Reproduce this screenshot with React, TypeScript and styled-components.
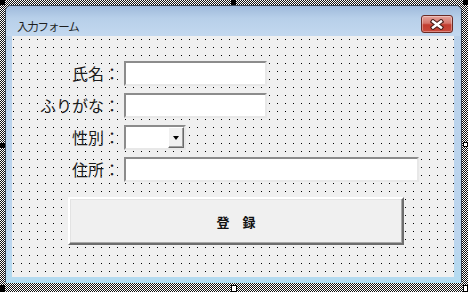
import React from 'react';
import styled, { createGlobalStyle } from 'styled-components';

const GlobalStyle = createGlobalStyle`
  html, body {
    margin: 0;
    padding: 0;
  }
  body {
    font-family: "Noto Sans CJK JP", "Noto Sans", sans-serif;
    background: #fff;
  }
`;

// hatched selection frame around the form in design mode
const Stage = styled.div`
  position: relative;
  width: 468px;
  height: 292px;
  box-sizing: border-box;
  padding: 5px 6px 9px 5px;
  background-color: #fff;
  background-image: repeating-conic-gradient(#111 0 25%, #fff 0 50%);
  background-size: 2px 2px;
`;

const Handle = styled.div<{ $top: number; $left: number; $w?: number; $h?: number; $open?: boolean }>`
  position: absolute;
  top: ${(p) => p.$top}px;
  left: ${(p) => p.$left}px;
  width: ${(p) => p.$w ?? 5}px;
  height: ${(p) => p.$h ?? 5}px;
  box-sizing: border-box;
  background: ${(p) => (p.$open ? '#fff' : '#000')};
  border: 1px solid #000;
`;

const Window = styled.div`
  height: 100%;
  box-sizing: border-box;
  display: flex;
  flex-direction: column;
  border: 1px solid #3a4656;
  border-bottom-color: #a9dcef;
  border-radius: 6px 6px 0 0;
  background: linear-gradient(#b9d1ea, #bcd5ee 85%, #b3dbf0);
  overflow: hidden;
`;

const TitleBar = styled.div`
  height: 30px;
  flex: none;
  box-sizing: border-box;
  display: flex;
  align-items: center;
  justify-content: space-between;
  padding: 6px 8px 0 11px;
  background: linear-gradient(#9fbadb, #b7cfe9 40%, #c3d8ef);
`;

const Title = styled.span`
  font-size: 11.5px;
  letter-spacing: -1.2px;
  color: #1e1e1e;
  padding-top: 3px;
`;

const CloseButton = styled.div`
  width: 32px;
  height: 18px;
  box-sizing: border-box;
  display: flex;
  align-items: center;
  justify-content: center;
  border: 1px solid #6a2a24;
  border-radius: 3px;
  background: linear-gradient(#e6a59c 0%, #d4766b 45%, #c23d2f 55%, #c9493b 100%);
  box-shadow: inset 0 0 0 1px rgba(255, 255, 255, 0.35);
`;

const Body = styled.div`
  flex: 1;
  margin: 0 7px 5px 6px;
  padding: 25px 0 0 0;
  background-color: #f0f0f0;
  background-image: linear-gradient(to bottom, transparent 1px, #f0f0f0 1px),
    linear-gradient(to right, #000 1px, #f0f0f0 1px);
  background-size: 8px 8px;
  background-position: 1px 3px;
`;

const FormGrid = styled.div`
  display: grid;
  grid-template-columns: 108px auto;
  column-gap: 4px;
  row-gap: 7px;
  align-items: center;
  justify-items: start;
`;

const Label = styled.label`
  justify-self: end;
  font-size: 16px;
  line-height: 25px;
  color: #1c1c1c;
`;

const TextBox = styled.div<{ $width: number }>`
  width: ${(p) => p.$width}px;
  height: 25px;
  box-sizing: border-box;
  background: #fff;
  border: 2px solid;
  border-color: #8c8c8c #e8e8e8 #e8e8e8 #8c8c8c;
`;

const Combo = styled(TextBox)`
  display: flex;
  justify-content: flex-end;
  padding: 0;
`;

const DropButton = styled.div`
  width: 16px;
  height: 100%;
  box-sizing: border-box;
  display: flex;
  align-items: center;
  justify-content: center;
  background: #f0f0f0;
  border: 1px solid;
  border-color: #fff #696969 #696969 #fff;
  box-shadow: inset -1px -1px 0 #a0a0a0;
`;

const Arrow = styled.span`
  width: 0;
  height: 0;
  border-left: 3.5px solid transparent;
  border-right: 3.5px solid transparent;
  border-top: 4px solid #000;
`;

const CommandButton = styled.div`
  width: 336px;
  height: 48px;
  margin: 15px 0 0 56px;
  box-sizing: border-box;
  display: flex;
  align-items: center;
  justify-content: center;
  background: #f0f0f0;
  border: 2px solid;
  border-color: #fff #6d6d6d #6d6d6d #fff;
  box-shadow: inset -1px -1px 0 #a8a8a8, inset 1px 1px 0 #e3e3e3;
  font-size: 13px;
  font-weight: 700;
  color: #111;
`;

const CloseIcon = () => (
  <svg width="14" height="11" viewBox="0 0 14 11">
    <path d="M3 2.5 L11 8.5 M11 2.5 L3 8.5" stroke="#4a1c17" strokeWidth="4.6" strokeLinecap="square" />
    <path d="M3 2.5 L11 8.5 M11 2.5 L3 8.5" stroke="#fff" strokeWidth="2.4" strokeLinecap="square" />
  </svg>
);

const App = (): JSX.Element => {
  return (
    <Stage>
      <GlobalStyle />
      <Window>
        <TitleBar>
          <Title>入力フォーム</Title>
          <CloseButton>
            <CloseIcon />
          </CloseButton>
        </TitleBar>
        <Body>
          <FormGrid>
            <Label>氏名：</Label>
            <TextBox $width={143} />
            <Label>ふりがな：</Label>
            <TextBox $width={143} />
            <Label>性別：</Label>
            <Combo $width={62}>
              <DropButton>
                <Arrow />
              </DropButton>
            </Combo>
            <Label>住所：</Label>
            <TextBox $width={295} />
          </FormGrid>
          <CommandButton>登　録</CommandButton>
        </Body>
      </Window>
      <Handle $top={0} $left={0} />
      <Handle $top={0} $left={231} />
      <Handle $top={0} $left={463} />
      <Handle $top={143} $left={0} />
      <Handle $top={142} $left={463} $open />
      <Handle $top={285} $left={0} $h={7} />
      <Handle $top={285} $left={231} $w={6} $h={7} $open />
      <Handle $top={285} $left={463} $h={7} $open />
    </Stage>
  );
};

export default App;
